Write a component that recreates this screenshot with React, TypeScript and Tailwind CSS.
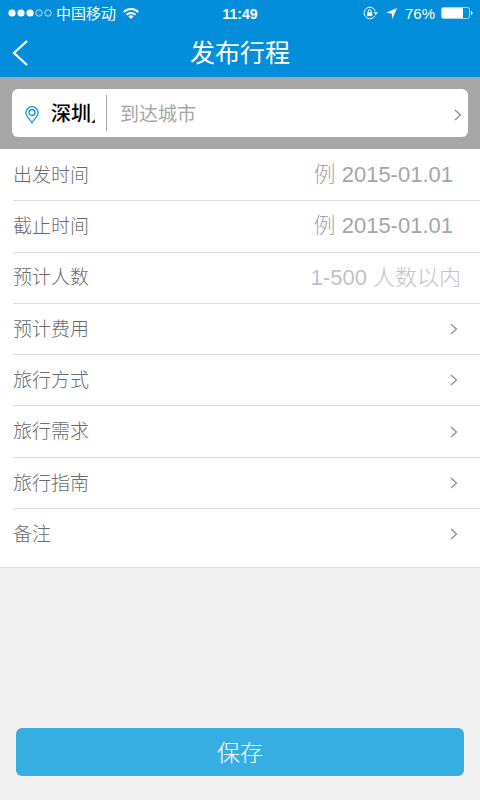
import React from "react";

const fields = [
  { id: "start", label: "出发时间", placeholder: "例 2015-01.01", style: "pr-[27px] placeholder:text-[#a6a6a6]" },
  { id: "end", label: "截止时间", placeholder: "例 2015-01.01", style: "pr-[27px] placeholder:text-[#a6a6a6]" },
  { id: "people", label: "预计人数", placeholder: "1-500 人数以内", style: "pr-[19px] placeholder:text-[#c2c2c7]" },
];

const links = ["预计费用", "旅行方式", "旅行需求", "旅行指南"];

function Chevron() {
  return (
    <svg className="h-3 w-2 shrink-0" viewBox="0 0 8 12" fill="none" stroke="#8c8c8c" strokeWidth="1.2" aria-hidden="true">
      <path d="M1 1l5.500 5L1 11" />
    </svg>
  );
}

function StatusBar() {
  return (
    <div className="grid h-6 grid-cols-3 items-center text-[15px] leading-6">
      <div className="flex items-center pl-2">
        <svg className="h-2 w-11" viewBox="0 0 44 8" aria-hidden="true">
          <g fill="#fff">
            <circle cx="4" cy="4" r="3.6" />
            <circle cx="13" cy="4" r="3.6" />
            <circle cx="22" cy="4" r="3.6" />
          </g>
          <g fill="none" stroke="#fff" strokeWidth="0.7">
            <circle cx="31" cy="4" r="3.2" />
            <circle cx="40" cy="4" r="3.2" />
          </g>
        </svg>
        <span className="ml-1 pt-0.5 whitespace-nowrap">中国移动</span>
        <svg className="ml-[7px] h-[11px] w-4 shrink-0" viewBox="0 0 16 11" fill="none" stroke="#fff" strokeWidth="2" aria-hidden="true">
          <path d="M.8 4.1a10.2 10.2 0 0 1 14.4 0" />
          <path d="M3.5 6.900a6.400 6.400 0 0 1 9 0" />
          <path d="M8 11L5.4 8.5a3.7 3.7 0 0 1 5.2 0z" fill="#fff" stroke="none" />
        </svg>
      </div>
      <span className="pt-px text-center text-sm leading-6 font-bold">11:49</span>
      <div className="flex items-center justify-end pr-[7px]">
        <svg className="h-[14px] w-[15px]" viewBox="0 0 15 14" fill="none" stroke="#fff" aria-hidden="true">
          <path d="M12.4 5.2A5.8 5.8 0 1 0 12 9.7" />
          <path d="M10.6 6.2h4.400L12.8 9z" fill="#fff" stroke="none" />
          <path d="M4.2 6.3h5v3.800h-5z" fill="#fff" stroke="none" />
          <path d="M5.2 6.5V5.1a1.5 1.5 0 0 1 3 0v1.4" />
        </svg>
        <svg className="ml-2 h-[11px] w-[11px]" viewBox="0 0 11 11" fill="#fff" aria-hidden="true">
          <path d="M11 0L6.3 11 5.7 5.5 0 4.800z" />
        </svg>
        <span className="ml-2 pt-px">76%</span>
        <svg className="ml-[6px] h-3 w-8" viewBox="0 0 32 12" aria-hidden="true">
          <rect x=".5" y=".5" width="28" height="11" rx="2" fill="none" stroke="#fff" strokeOpacity=".65" />
          <rect x="1" y="1" width="21" height="10" rx="1" fill="#fff" />
          <path d="M30 4v4q1.6-.6 1.6-2T30 4z" fill="#fff" />
        </svg>
      </div>
    </div>
  );
}

export default function App() {
  return (
    <div className="flex min-h-screen flex-col bg-[#f0f0f0] font-['Liberation_Sans','Noto_Sans_CJK_SC',sans-serif] text-[#6b6b6b]">
      <header className="bg-[#028edb] text-white">
        <StatusBar />
        <div className="grid h-[53px] grid-cols-[48px_1fr_48px] items-center">
          <button type="button" aria-label="返回" className="flex h-full items-center pt-1 pl-3">
            <svg className="h-[26px] w-4" viewBox="0 0 16 26" fill="none" stroke="#fff" strokeWidth="2.2" aria-hidden="true">
              <path d="M15 1L2 13l13 12" />
            </svg>
          </button>
          <h1 className="pt-1 text-center text-[25px] leading-8">发布行程</h1>
        </div>
      </header>

      <main className="flex grow flex-col">
        <div className="bg-[#a7a7a7] px-3 py-3">
          <div className="flex h-12 items-center rounded-md bg-white">
            <svg className="mt-1 ml-[13px] h-[18px] w-[14px] shrink-0" viewBox="0 0 14 18" fill="none" stroke="#178fdc" strokeWidth="1.3" aria-hidden="true">
              <path d="M7 16.8C5.8 14.2.9 10.5.9 6.8a6.1 6.1 0 0 1 12.2 0c0 3.700-4.900 7.400-6.100 10z" />
              <circle cx="7" cy="6.500" r="3" />
            </svg>
            <select aria-label="出发城市" className="mt-0.5 ml-3 w-10 appearance-none bg-transparent text-[20px] leading-8 font-medium text-black">
              <option>深圳</option>
            </select>
            <svg className="mt-4 h-1 w-1 shrink-0" viewBox="0 0 4 4" fill="#333" aria-hidden="true">
              <path d="M4 0v4H0z" />
            </svg>
            <span className="ml-[11px] h-9 w-px bg-[#a6a6a6]" />
            <button type="button" className="flex h-full grow items-center justify-between pt-1 pr-[6px] pl-[13px] text-[19px] text-[#a6a6a6]">
              <span>到达城市</span>
              <Chevron />
            </button>
          </div>
        </div>

        <form className="flex grow flex-col" onSubmit={(e) => e.preventDefault()}>
          <div className="border-b border-[#dedede] bg-white text-[19px] font-light">
            <div className="grid h-[360px] grid-rows-7 pt-px">
              {fields.map((f) => (
                <div key={f.id} className="ml-[13px] flex items-center border-b border-[#dedede]">
                  <label htmlFor={f.id} className="shrink-0 pt-0.5">{f.label}</label>
                  <input id={f.id} placeholder={f.placeholder} className={"h-full w-full min-w-0 bg-transparent text-right text-[22px] outline-none " + f.style} />
                </div>
              ))}
              {links.map((l) => (
                <button type="button" key={l} className="ml-[13px] flex items-center justify-between border-b border-[#dedede] pr-[22px]">
                  <span className="pt-0.5">{l}</span>
                  <Chevron />
                </button>
              ))}
            </div>
            <button type="button" className="flex w-full items-center justify-between pt-[10px] pr-[22px] pb-[18px] pl-[13px] leading-7">
              <span className="pt-0.5">备注</span>
              <Chevron />
            </button>
          </div>
          <div className="mt-auto px-4 pb-6">
            <button type="submit" className="h-12 w-full rounded-md bg-[#36aee1] pt-0.5 text-[23px] font-light text-white">保存</button>
          </div>
        </form>
      </main>
    </div>
  );
}
